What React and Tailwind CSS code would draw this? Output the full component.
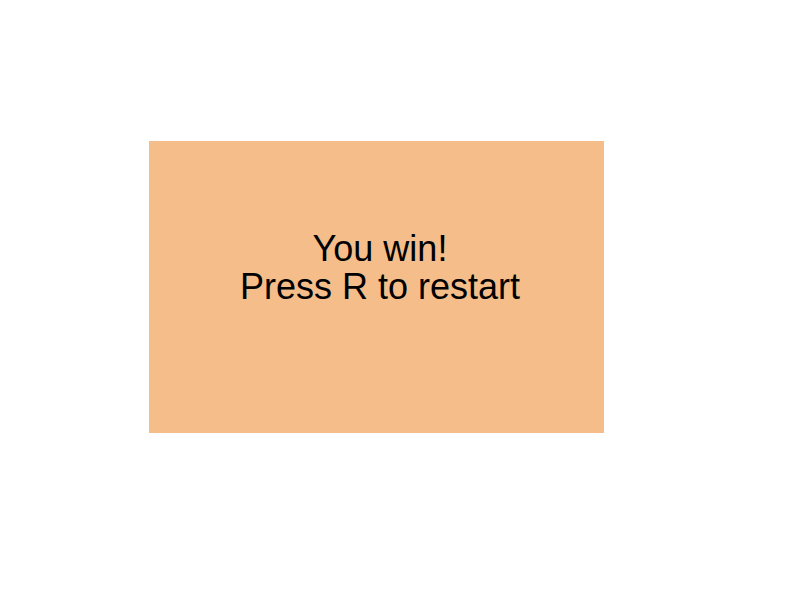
export default function App() {
  return (
    <div className="min-h-screen bg-white pl-[149px] pt-[141px]">
      <div className="flex h-[292px] w-[455px] flex-col items-center bg-[#f5bd89] pl-[7px] pt-[89px] font-['Liberation_Sans',Arial,sans-serif] text-[36px] leading-[38px] text-black">
        <div>You win!</div>
        <div>Press R to restart</div>
      </div>
    </div>
  );
}
